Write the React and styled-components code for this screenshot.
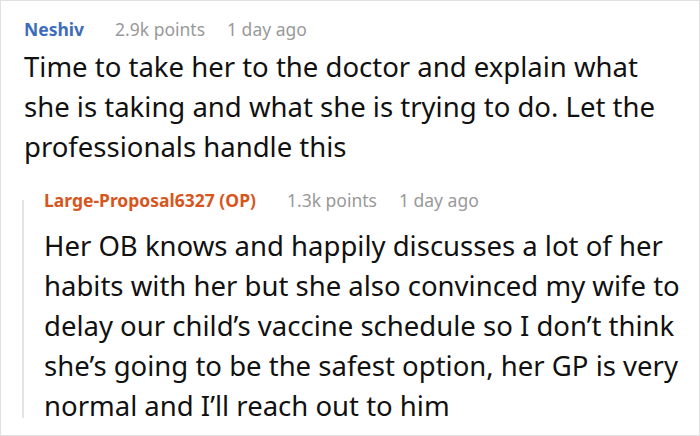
import React from 'react';
import styled, { createGlobalStyle } from 'styled-components';

const Global = createGlobalStyle`
  html, body {
    margin: 0;
    padding: 0;
    background: #fff;
  }
  body {
    font-family: "Noto Sans", "Open Sans", sans-serif;
  }
`;

const Frame = styled.div`
  width: 700px;
  height: 436px;
  box-sizing: border-box;
  border: 1px solid #e0e0e0;
  padding: 16px 18px 0 23px;
  overflow: hidden;
`;

const Comment = styled.div`
  display: flex;
  flex-direction: column;
  flex: 1;
  min-width: 0;
`;

const Meta = styled.div`
  display: flex;
  align-items: baseline;
  gap: 22px;
  font-size: 17.5px;
  line-height: 24px;
  color: #999;
`;

const Author = styled.span`
  font-weight: 700;
  margin-right: 9px;
  color: ${(p) => (p.$op ? '#d6561d' : '#3d6dba')};
`;

const Body = styled.p`
  margin: ${(p) => (p.$reply ? '14px' : '6px')} 0 0;
  font-size: 27.5px;
  line-height: 40px;
  color: #111;
`;

const Replies = styled.div`
  display: flex;
  margin-top: 21px;
  margin-left: -2px;
`;

const ThreadLine = styled.div`
  flex: none;
  width: 2px;
  height: 218px;
  margin-top: 12px;
  margin-right: 20px;
  background: #e4e4e4;
`;

export default function App() {
  return (
    <>
      <Global />
      <Frame>
        <Comment>
          <Meta>
            <Author>Neshiv</Author>
            <span>2.9k points</span>
            <span>1 day ago</span>
          </Meta>
          <Body>
            Time to take her to the doctor and explain what she is taking and
            what she is trying to do. Let the professionals handle this
          </Body>
        </Comment>
        <Replies>
          <ThreadLine />
          <Comment>
            <Meta>
              <Author $op>Large-Proposal6327 (OP)</Author>
              <span>1.3k points</span>
              <span>1 day ago</span>
            </Meta>
            <Body $reply>
              Her OB knows and happily discusses a lot of her habits with her
              but she also convinced my wife to delay our child’s vaccine
              schedule so I don’t think she’s going to be the safest option, her
              GP is very normal and I’ll reach out to him
            </Body>
          </Comment>
        </Replies>
      </Frame>
    </>
  );
}
